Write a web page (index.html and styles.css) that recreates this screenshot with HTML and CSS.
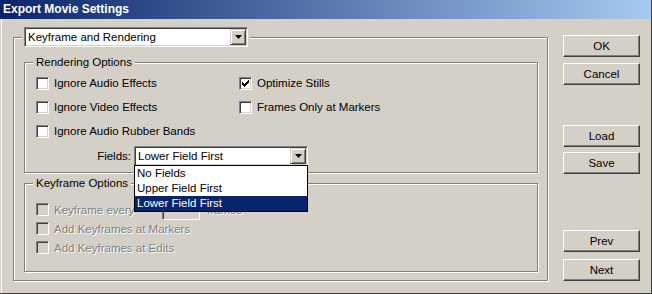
FILE: index.html
```html
<!DOCTYPE html>
<html lang="en">
<head>
  <meta charset="UTF-8">
  <title>Export Movie Settings</title>
  <link rel="stylesheet" href="styles.css">
</head>
<body>
  <div class="window">
    <div class="titlebar">Export Movie Settings</div>
    <div class="client">
      <fieldset class="group outer">
        <legend>
          <div class="combo wide">
            <span class="combo-text">Keyframe and Rendering</span>
            <span class="combo-btn"><svg width="7" height="4" viewBox="0 0 7 4"><path d="M0 0h7L3.5 4z"/></svg></span>
          </div>
        </legend>

        <fieldset class="group render">
          <legend>Rendering Options</legend>
          <div class="options">
            <label class="check"><span class="box"></span>Ignore Audio Effects</label>
            <label class="check"><span class="box"><svg width="7" height="7" viewBox="0 0 7 7" shape-rendering="crispEdges"><path d="M6 0h1v1h-1z M5 1h2v1h-2z M0 2h1v1h-1z M4 2h3v1h-3z M0 3h2v1h-2z M3 3h3v1h-3z M0 4h5v1h-5z M1 5h3v1h-3z M2 6h1v1h-1z"/></svg></span>Optimize Stills</label>
            <label class="check"><span class="box"></span>Ignore Video Effects</label>
            <label class="check"><span class="box"></span>Frames Only at Markers</label>
            <label class="check"><span class="box"></span>Ignore Audio Rubber Bands</label>
          </div>
          <div class="fields-row">
            <span class="fields-label">Fields:</span>
            <div class="combo fields">
              <span class="combo-text">Lower Field First</span>
              <span class="combo-btn"><svg width="7" height="4" viewBox="0 0 7 4"><path d="M0 0h7L3.5 4z"/></svg></span>
              <ul class="dropdown">
                <li>No Fields</li>
                <li>Upper Field First</li>
                <li class="selected">Lower Field First</li>
              </ul>
            </div>
          </div>
        </fieldset>

        <fieldset class="group keyframe">
          <legend>Keyframe Options</legend>
          <div class="check disabled">
            <span class="box"></span>
            <span class="every-label">Keyframe every</span>
            <span class="num-input"></span>
            <span class="frames">frames</span>
          </div>
          <div class="check disabled"><span class="box"></span>Add Keyframes at Markers</div>
          <div class="check disabled"><span class="box"></span>Add Keyframes at Edits</div>
        </fieldset>
      </fieldset>

      <div class="buttons">
        <button class="btn ok">OK</button>
        <button class="btn cancel">Cancel</button>
        <button class="btn load">Load</button>
        <button class="btn save">Save</button>
        <button class="btn prev">Prev</button>
        <button class="btn next">Next</button>
      </div>
    </div>
  </div>
</body>
</html>
```

FILE: styles.css
```css
* {
  box-sizing: border-box;
}
body {
  margin: 0;
  font-family: "Liberation Sans", Arial, sans-serif;
  font-size: 11.5px;
  color: #000;
  background: #d4d0c8;
}
.window {
  width: 652px;
  height: 294px;
  display: flex;
  flex-direction: column;
  background: #d4d0c8;
  border-right: 1px solid #404040;
  border-bottom: 1px solid #404040;
}
.titlebar {
  height: 19px;
  line-height: 19px;
  padding-left: 3px;
  background: linear-gradient(to right, #0a246a, #a6caf0);
  color: #fff;
  font-weight: bold;
  font-size: 12px;
}
.client {
  flex: 1;
  display: flex;
  align-items: flex-start;
  padding: 8px 0 0 12px;
  border-left: 1px solid #d4d0c8;
  box-shadow: inset 1px 0 0 #fff;
}

/* etched group boxes */
.group {
  margin: 0;
  min-width: 0;
  border: 1px solid #808080;
  box-shadow: 1px 1px 0 #fff, inset 1px 1px 0 #fff;
}
.group legend {
  background: #d4d0c8;
}
.outer {
  width: 535px;
  padding: 9px 9px 8px 10px;
}
.outer > legend {
  padding: 0 2px;
  margin-left: -2px;
}
.render {
  padding: 2px 0 6px 11px;
}
.render > legend,
.keyframe > legend {
  line-height: 13px;
  padding: 0 3px;
  margin-left: -3px;
}
.keyframe {
  margin-top: 4px;
  padding: 10px 0 14px 11px;
}

/* checkboxes */
.options {
  display: grid;
  grid-template-columns: 203px 1fr;
  grid-auto-rows: 24px;
}
.check {
  display: flex;
  align-items: center;
  gap: 5px;
}
.keyframe .check {
  height: 19px;
}
.box {
  width: 13px;
  height: 13px;
  flex: none;
  display: flex;
  align-items: center;
  justify-content: center;
  background: #fff;
  border: 1px solid;
  border-color: #808080 #fff #fff #808080;
  box-shadow: inset 1px 1px 0 #404040, inset -1px -1px 0 #d4d0c8;
}
.disabled {
  color: #808080;
  text-shadow: 1px 1px 0 #fff;
}
.disabled .box {
  background: #d4d0c8;
}
.every-label {
  width: 103px;
}
.num-input {
  width: 38px;
  height: 20px;
  border: 1px solid;
  border-color: #808080 #fff #fff #808080;
  box-shadow: inset 1px 1px 0 #404040, inset -1px -1px 0 #d4d0c8;
}
.frames {
  margin-left: 2px;
}

/* combo boxes */
.combo {
  position: relative;
  display: flex;
  align-items: center;
  height: 20px;
  padding: 1px;
  background: #fff;
  border: 1px solid;
  border-color: #808080 #fff #fff #808080;
  box-shadow: inset 1px 1px 0 #404040, inset -1px -1px 0 #d4d0c8;
}
.combo.wide {
  width: 224px;
}
.combo.fields {
  width: 174px;
}
.combo-text {
  flex: 1;
  padding-left: 2px;
  line-height: 16px;
  white-space: nowrap;
}
.combo-btn {
  width: 16px;
  height: 16px;
  display: flex;
  align-items: center;
  justify-content: center;
  background: #d4d0c8;
  border: 1px solid;
  border-color: #d4d0c8 #404040 #404040 #d4d0c8;
  box-shadow: inset 1px 1px 0 #fff, inset -1px -1px 0 #808080;
}
.fields-row {
  display: flex;
  align-items: center;
  margin-top: 3px;
}
.fields-label {
  width: 98px;
  padding-right: 3px;
  text-align: right;
}
.dropdown {
  position: absolute;
  top: 100%;
  left: -1px;
  z-index: 2;
  width: 174px;
  margin: 0;
  padding: 0;
  list-style: none;
  background: #fff;
  border: 1px solid #000;
}
.dropdown li {
  height: 15px;
  line-height: 15px;
  padding-left: 2px;
}
.dropdown li.selected {
  background: #0a246a;
  color: #fff;
}

/* buttons */
.buttons {
  display: flex;
  flex-direction: column;
  margin: 8px 0 0 15px;
}
.btn {
  width: 77px;
  height: 22px;
  padding: 0;
  font: inherit;
  color: #000;
  background: #d4d0c8;
  border: 1px solid;
  border-color: #fff #404040 #404040 #fff;
  box-shadow: inset -1px -1px 0 #808080;
}
.cancel { margin-top: 6px; }
.load { margin-top: 40px; }
.save { margin-top: 5px; }
.prev { margin-top: 56px; }
.next { margin-top: 7px; }
```
